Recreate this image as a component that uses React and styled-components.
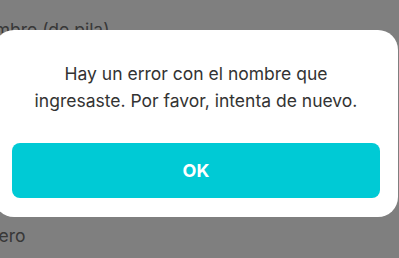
import React from 'react'
import styled, { createGlobalStyle } from 'styled-components'

const GlobalStyle = createGlobalStyle`
    html, body {
        margin: 0;
        padding: 0;
        background: #ffffff;
        font-family: Inter, "Noto Sans", Arial, sans-serif;
        overflow: hidden;
    }
`

const Page = styled.div`
    width: 399px;
    height: 258px;
    overflow: hidden;
    background: #ffffff;
`

const Form = styled.form`
    display: flex;
    flex-direction: column;
    margin-left: -29px;
    padding-top: 20px;
`

const Label = styled.label`
    font-size: 17.5px;
    line-height: 20px;
    color: #707070;
`

const Field = styled.div`
    margin-top: 186px;
    text-indent: -10px;
    font-size: 17.5px;
    line-height: 20px;
    color: #707070;
    padding-bottom: 13px;
    border-bottom: 1px solid #d0d0d0;
`

const Overlay = styled.div`
    position: fixed;
    inset: 0;
    background: rgba(0, 0, 0, 0.5);
    display: flex;
    justify-content: center;
    align-items: flex-start;
    padding-top: 30px;
`

const Dialog = styled.div`
    flex: none;
    width: 404px;
    margin-right: 7px;
    box-sizing: border-box;
    background: #ffffff;
    border-radius: 20px;
    padding: 30px 18px 19px;
    display: flex;
    flex-direction: column;
    gap: 29px;
`

const Message = styled.p`
    margin: 0;
    text-align: center;
    font-size: 17.5px;
    line-height: 27px;
    color: #333333;
`

const OkButton = styled.button`
    height: 55px;
    border: none;
    border-radius: 8px;
    background: #00cad5;
    color: #ffffff;
    font-family: Inter, "Noto Sans", Arial, sans-serif;
    font-size: 18px;
    font-weight: 700;
    cursor: pointer;
`

export default function App(){
    return(
        <Page>
            <GlobalStyle />
            <Form>
                <Label>Nombre (de pila)</Label>
                <Field>Primero</Field>
            </Form>
            <Overlay>
                <Dialog>
                    <Message>
                        Hay un error con el nombre que<br />
                        ingresaste. Por favor, intenta de nuevo.
                    </Message>
                    <OkButton type="button">OK</OkButton>
                </Dialog>
            </Overlay>
        </Page>
    )
}
